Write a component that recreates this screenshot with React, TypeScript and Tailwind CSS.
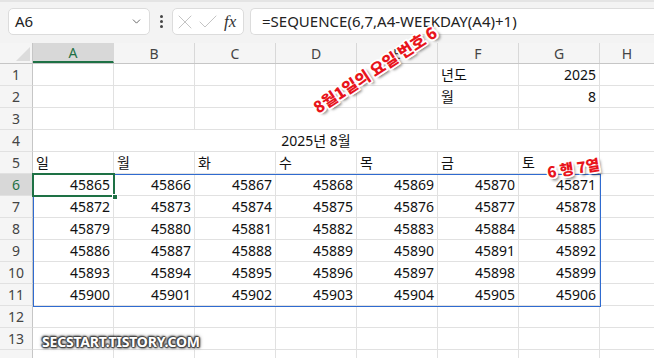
import React from 'react';
import { ChevronDown, X, Check } from 'lucide-react';

const cols = ['A', 'B', 'C', 'D', 'E', 'F', 'G'];
const days = ['일', '월', '화', '수', '목', '금', '토'];
const start = 45865;

const Cell: React.FC<{ children?: React.ReactNode; right?: boolean }> = ({ children, right }) => (
  <div
    className={`w-[81px] h-full shrink-0 border-r border-b border-[#e1e1e1] px-[3px] flex items-center ${
      right ? 'justify-end' : 'justify-start'
    } overflow-visible whitespace-nowrap`}
  >
    {children}
  </div>
);

const RowHead: React.FC<{ n?: number; active?: boolean }> = ({ n, active }) => (
  <div
    className={`w-[33px] h-full shrink-0 border-r border-[#c6c6c6] border-b border-b-[#e1e1e1] flex items-center justify-center text-[14px] ${
      active ? 'bg-[#d8d8d8] text-[#1e7145]' : 'bg-[#f5f5f5] text-[#444]'
    }`}
  >
    {n}
  </div>
);

const Row: React.FC<{ n?: number; active?: boolean; children?: React.ReactNode }> = ({ n, active, children }) => (
  <div className="flex h-[22px]">
    <RowHead n={n} active={active} />
    {children}
    <div className="flex-1 h-full border-b border-[#e1e1e1]" />
  </div>
);

const blanks = (k: number) => Array.from({ length: k }, (_, i) => <Cell key={`b${i}`} />);

const App: React.FC = () => {
  const rows = Array.from({ length: 6 }, (_, r) => Array.from({ length: 7 }, (_, c) => start + r * 7 + c));

  return (
    <div className="w-[654px] h-[358px] overflow-hidden bg-white text-[#111] relative font-['Noto_Sans','Noto_Sans_CJK_KR',sans-serif]">
      {/* Formula bar */}
      <div className="h-[43px] bg-[#f3f3f3] border-t-[2px] border-[#e4e4e4] flex items-start pt-[6px] pl-[8px]">
        <div className="w-[142px] h-[27px] bg-white border border-[#dcdcdc] rounded-[5px] flex items-center justify-between pl-[6px] pr-[6px]">
          <span className="text-[15px] text-[#222]">A6</span>
          <ChevronDown className="w-[13px] h-[13px] text-[#555]" strokeWidth={1.6} />
        </div>
        <div className="w-[22px] h-[27px] flex flex-col items-center justify-center gap-[2px]">
          <span className="w-[3px] h-[3px] rounded-full bg-[#444]" />
          <span className="w-[3px] h-[3px] rounded-full bg-[#444]" />
          <span className="w-[3px] h-[3px] rounded-full bg-[#444]" />
        </div>
        <div className="w-[72px] h-[27px] bg-white border border-[#dcdcdc] rounded-[5px] flex items-center">
          <X className="w-[24px] h-[24px] shrink-0 text-[#c4c4c4]" strokeWidth={1} />
          <Check className="w-[24px] h-[24px] shrink-0 -ml-[1px] text-[#c4c4c4]" strokeWidth={1} />
          <span className="ml-[4px] font-['Liberation_Serif',serif] italic text-[17px] text-[#333] leading-none">fx</span>
        </div>
        <div className="flex-1 ml-[6px] h-[27px] bg-white border border-[#dcdcdc] border-r-0 rounded-l-[5px] flex items-center pl-[11px]">
          <span className="text-[15px] text-[#222]">=SEQUENCE(6,7,A4-WEEKDAY(A4)+1)</span>
        </div>
      </div>

      {/* Column headers */}
      <div className="flex h-[21px] bg-[#f5f5f5] border-b border-[#c6c6c6] text-[14px] text-[#444]">
        <div className="w-[33px] shrink-0 border-r border-[#c6c6c6] relative">
          <div className="absolute right-[2px] bottom-[2px] w-0 h-0 border-l-[14px] border-l-transparent border-b-[14px] border-b-[#dcdcdc]" />
        </div>
        {cols.map((c, i) => (
          <div
            key={c}
            className={`w-[81px] shrink-0 border-r border-[#d8d8d8] flex items-center justify-center ${
              i === 0 ? 'bg-[#d8d8d8] text-[#1e7145] border-b-[2px] border-b-[#1e7145]' : ''
            }`}
          >
            {c}
          </div>
        ))}
        <div className="flex-1 flex items-center justify-center">H</div>
      </div>

      {/* Grid */}
      <div className="text-[14px]">
        <Row n={1}>
          {blanks(5)}
          <Cell>년도</Cell>
          <Cell right>2025</Cell>
        </Row>
        <Row n={2}>
          {blanks(5)}
          <Cell>월</Cell>
          <Cell right>8</Cell>
        </Row>
        <Row n={3}>{blanks(7)}</Row>
        <Row n={4}>
          <div className="w-[567px] shrink-0 h-full border-r border-b border-[#e1e1e1] flex items-center justify-center">
            2025년 8월
          </div>
        </Row>
        <Row n={5}>
          {days.map((d) => (
            <Cell key={d}>{d}</Cell>
          ))}
        </Row>
        {rows.map((r, i) => (
          <Row key={i} n={6 + i} active={i === 0}>
            {r.map((v) => (
              <Cell key={v} right>
                {v}
              </Cell>
            ))}
          </Row>
        ))}
        <Row n={12}>{blanks(7)}</Row>
        <Row n={13}>{blanks(7)}</Row>
        <Row>{blanks(7)}</Row>
      </div>

      {/* Range outline and active cell */}
      <div className="absolute left-[33px] top-[174px] w-[568px] h-[133px] border border-[#2f6bd0] pointer-events-none" />
      <div className="absolute left-[32px] top-[173px] w-[83px] h-[24px] border-[2px] border-[#1e7145] pointer-events-none" />
      <div className="absolute left-[112px] top-[194px] w-[6px] h-[6px] bg-[#1e7145] border border-white" />

      {/* Annotations */}
      <div className="absolute left-[303px] top-[57px] -rotate-[33deg] origin-center whitespace-nowrap font-['Noto_Sans_CJK_KR',sans-serif] font-black text-[16px] text-[#e8141b] [text-shadow:1.5px_0_0_#fff,-1.5px_0_0_#fff,0_1.5px_0_#fff,0_-1.5px_0_#fff,1.5px_1.5px_0_#fff,-1.5px_-1.5px_0_#fff,1.5px_-1.5px_0_#fff,-1.5px_1.5px_0_#fff,2px_3px_3px_rgba(0,0,0,0.6)]">
        8월1일의 요일 번호 6
      </div>
      <div className="absolute left-[547px] top-[157px] -rotate-[9deg] whitespace-nowrap font-['Noto_Sans_CJK_KR',sans-serif] font-black text-[15px] text-[#e8141b] [text-shadow:1.5px_0_0_#fff,-1.5px_0_0_#fff,0_1.5px_0_#fff,0_-1.5px_0_#fff,1.5px_1.5px_0_#fff,-1.5px_-1.5px_0_#fff,1.5px_-1.5px_0_#fff,-1.5px_1.5px_0_#fff,2px_3px_3px_rgba(0,0,0,0.6)]">
        6 행 7열
      </div>
      <div className="absolute left-[42px] top-[331px] whitespace-nowrap font-['Noto_Sans',sans-serif] font-bold text-[14px] tracking-[-0.2px] text-white [text-shadow:1px_0_1px_#444,-1px_0_1px_#444,0_1px_1px_#444,0_-1px_1px_#444,1px_1px_2px_#333,-1px_-1px_2px_#333,0_0_4px_#555]">
        SECSTART.TISTORY.COM
      </div>
    </div>
  );
};

export default App;
